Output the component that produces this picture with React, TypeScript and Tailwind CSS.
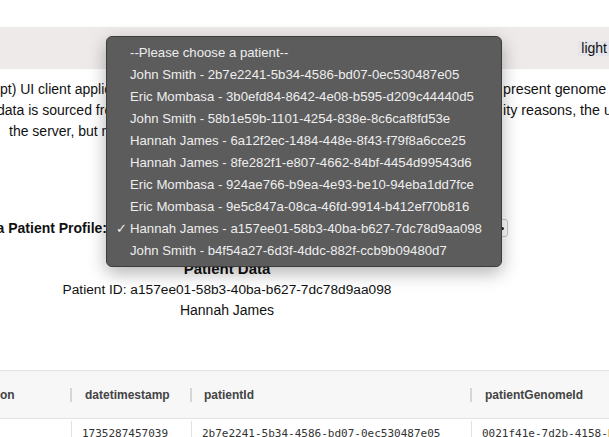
import React from "react";

const options = [
  "--Please choose a patient--",
  "John Smith - 2b7e2241-5b34-4586-bd07-0ec530487e05",
  "Eric Mombasa - 3b0efd84-8642-4e08-b595-d209c44440d5",
  "John Smith - 58b1e59b-1101-4254-838e-8c6caf8fd53e",
  "Hannah James - 6a12f2ec-1484-448e-8f43-f79f8a6cce25",
  "Hannah James - 8fe282f1-e807-4662-84bf-4454d99543d6",
  "Eric Mombasa - 924ae766-b9ea-4e93-be10-94eba1dd7fce",
  "Eric Mombasa - 9e5c847a-08ca-46fd-9914-b412ef70b816",
  "Hannah James - a157ee01-58b3-40ba-b627-7dc78d9aa098",
  "John Smith - b4f54a27-6d3f-4ddc-882f-ccb9b09480d7",
];

export default function App() {
  return (
    <div
      className="relative w-[609px] h-[437px] overflow-hidden bg-white text-[#111]"
      style={{ fontFamily: '"Liberation Sans", Arial, sans-serif' }}
    >
      <div className="h-[27px]" />
      <div className="h-[42px] bg-[#edeae9] flex items-center justify-end">
        <span className="bg-[#e4e4ea] pl-[3px] pr-[8px] -mr-[6px] h-[15px] leading-[15px] text-[14px] text-[#111]">
          light
        </span>
      </div>

      <div className="mt-[10px] text-[14px] leading-[21px]">
        <div className="flex whitespace-nowrap">
          <span className="w-[503px] shrink-0 overflow-hidden">
            pt) UI client application built to view and re
          </span>
          <span className="text-[14.3px]">present genome (genomic) data</span>
        </div>
        <div className="flex whitespace-nowrap -ml-[3px]">
          <span className="w-[506px] shrink-0 overflow-hidden">
            data is sourced from a backend server. For secur
          </span>
          <span className="text-[14.3px]">ity reasons, the user</span>
        </div>
        <div className="flex whitespace-nowrap pl-[9px]">
          <span>the server, but requests are made on behalf of the user</span>
        </div>
      </div>

      <div className="mt-[77px] flex items-center h-[18px]">
        <div className="w-[107px] shrink-0 overflow-hidden flex justify-end whitespace-nowrap text-[14px] font-bold leading-[18px]">
          <span>Select a Patient Profile:</span>
        </div>
        <div className="ml-[3px] w-[398px] h-[18px] border border-[#c8c8c8] rounded-[3px] bg-white flex items-center justify-end pr-[3px]">
          <span className="w-[3px] h-[3px] bg-[#222] rounded-full" />
        </div>
      </div>

      <div className="mt-[21px] w-[454px] text-center text-[14px] leading-[21px]">
        <div className="text-[15px] font-bold">Patient Data</div>
        <div className="text-[13.7px]">Patient ID: a157ee01-58b3-40ba-b627-7dc78d9aa098</div>
        <div>Hannah James</div>
      </div>

      <div className="mt-[49px] border-t border-[#e2e2e4]">
        <div className="h-[48px] bg-[#f7f7f8] border-b border-[#e2e2e4] flex items-center text-[12px] font-bold text-[#444]">
          <div className="w-[72px] shrink-0 flex items-center justify-between">
            <span>on</span>
            <span className="w-[2px] h-[14px] bg-[#d6d6d8]" />
          </div>
          <div className="w-[120px] shrink-0 flex items-center justify-between">
            <span className="pl-[13px]">datetimestamp</span>
            <span className="w-[2px] h-[14px] bg-[#d6d6d8]" />
          </div>
          <div className="w-[280px] shrink-0 flex items-center justify-between">
            <span className="pl-[12px]">patientId</span>
            <span className="w-[2px] h-[14px] bg-[#d6d6d8]" />
          </div>
          <div className="pl-[13px]">patientGenomeId</div>
        </div>
        <div
          className="flex text-[11px] leading-[26px] pt-[2px] text-[#333]"
          style={{ fontFamily: '"DejaVu Sans Mono", monospace' }}
        >
          <div className="w-[72px] shrink-0 border-r border-[#e2e2e4]" />
          <div className="w-[120px] shrink-0 border-r border-[#e2e2e4] pl-[10px]">1735287457039</div>
          <div className="w-[280px] shrink-0 border-r border-[#e2e2e4] pl-[10px] whitespace-nowrap">
            2b7e2241-5b34-4586-bd07-0ec530487e05
          </div>
          <div className="pl-[10px] whitespace-nowrap">0021f41e-7d2b-4158-b0a1-2c3d4e5f6a7b</div>
        </div>
      </div>

      <div className="absolute left-[106px] top-[36px] w-[396px] h-[231px] rounded-[6px] border border-[#3c3c3c] bg-[#5c5c5c] shadow-[0_6px_18px_rgba(0,0,0,0.3)] py-[5px] text-[13.2px] text-[#eeeeee]">
        {options.map((o, i) => (
          <div key={i} className="relative h-[22px] leading-[22px] pl-[23px] whitespace-nowrap">
            {i === 8 && <span className="absolute left-[9px] top-0">✓</span>}
            {o}
          </div>
        ))}
      </div>
    </div>
  );
}
